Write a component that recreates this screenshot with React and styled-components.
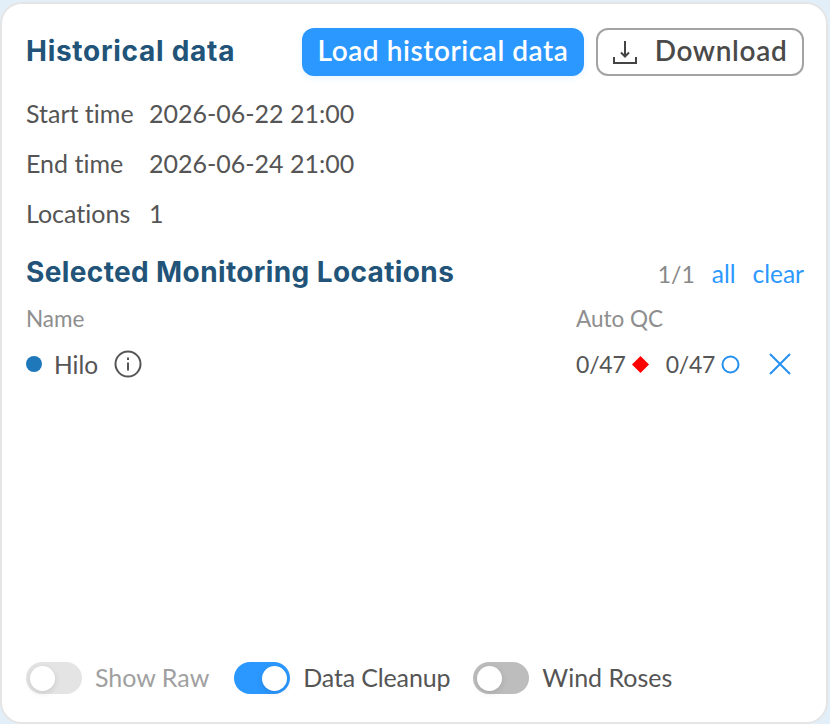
import React from 'react';
import styled, { createGlobalStyle } from 'styled-components';

const GlobalStyle = createGlobalStyle`
    html, body {
        margin: 0;
        padding: 0;
        background: #e2eef8;
    }
    body {
        font-family: Lato, "Noto Sans", sans-serif;
        font-variant-ligatures: none;
    }
`;

const Page = styled.div`
    width: 830px;
    height: 724px;
    box-sizing: border-box;
    padding: 2px 2px 0 0;
    overflow: hidden;
`;

const Card = styled.div`
    height: 100%;
    box-sizing: border-box;
    background: #fff;
    border: 2px solid #e5e5e5;
    border-radius: 22px;
    padding: 24px 22px 28px 24px;
    display: flex;
    flex-direction: column;
`;

const HeaderRow = styled.div`
    display: flex;
    align-items: center;
    justify-content: space-between;
    height: 48px;
`;

const Heading = styled.h2`
    margin: 0;
    font-family: Inter, Roboto, sans-serif;
    font-weight: 700;
    font-size: 28px;
    line-height: 46px;
    letter-spacing: ${(props) => props.$tracking}px;
    padding-bottom: ${(props) => props.$lift || 0}px;
    color: #215478;
`;

const Actions = styled.div`
    display: flex;
    gap: 12px;
`;

const PrimaryButton = styled.button`
    width: 282px;
    height: 48px;
    border: none;
    border-radius: 12px;
    background: #2b98ff;
    color: #fff;
    font-family: inherit;
    font-variant-ligatures: none;
    font-weight: 600;
    font-size: 28px;
    letter-spacing: 0.55px;
    padding: 0 0 4px;
    box-shadow: 0 2px 6px rgba(43, 152, 255, 0.1);
`;

const OutlineButton = styled.button`
    width: 208px;
    height: 48px;
    box-sizing: border-box;
    border: 2px solid #a3a3a3;
    border-radius: 12px;
    background: #fff;
    color: #4a4a4a;
    font-family: inherit;
    font-weight: 600;
    font-size: 28px;
    letter-spacing: 0.65px;
    display: flex;
    align-items: center;
    justify-content: center;
    gap: 18px;
    padding: 0 0 4px;
`;

const DownloadGlyph = styled.svg`
    margin-top: 4px;
`;

const InfoList = styled.div`
    display: flex;
    flex-direction: column;
    margin-top: 12px;
`;

const InfoRow = styled.div`
    display: flex;
    align-items: center;
    height: 50px;
    font-size: 25px;
    color: #555;
`;

const InfoLabel = styled.span`
    width: 123px;
`;

const SectionRow = styled.div`
    display: flex;
    align-items: center;
    justify-content: space-between;
    height: 48px;
    margin-top: 10px;
`;

const Pager = styled.div`
    display: flex;
    align-items: baseline;
    gap: 17px;
    font-size: 24.5px;
    padding-top: 2px;
    color: #888;
`;

const PagerCount = styled.span`
    font-size: 23px;
`;

const TextLink = styled.a`
    color: #2b98ff;
`;

const ColumnHead = styled.div`
    display: flex;
    justify-content: space-between;
    align-items: center;
    height: 44px;
    font-size: 22.5px;
    color: #8e8e8e;
`;

const AutoQcHead = styled.span`
    width: 228px;
`;

const LocationRow = styled.div`
    display: flex;
    align-items: center;
    height: 48px;
    font-size: 23px;
    color: #555;
`;

const Dot = styled.span`
    width: 16px;
    height: 16px;
    border-radius: 50%;
    background: #1f78b9;
    margin-right: 12px;
`;

const LocationName = styled.span`
    font-size: 24.5px;
    margin-right: 16px;
`;

const QcGroup = styled.div`
    margin-left: auto;
    width: 228px;
    box-sizing: border-box;
    padding-right: 12px;
    display: flex;
    align-items: center;
`;

const Count = styled.span`
    letter-spacing: -0.2px;
    margin-left: ${(props) => props.$before || 0}px;
    margin-right: ${(props) => props.$after}px;
`;

const Spacer = styled.div`
    flex: 1;
`;

const ToggleRow = styled.div`
    display: flex;
    align-items: center;
    height: 32px;
`;

const ToggleTrack = styled.span`
    width: 56px;
    height: 32px;
    box-sizing: border-box;
    padding: 3.5px;
    border-radius: 16px;
    margin-right: 13px;
    display: flex;
    justify-content: ${(props) => (props.$on ? 'flex-end' : 'flex-start')};
    background: ${(props) => props.$color};
`;

const ToggleKnob = styled.span`
    width: 25px;
    height: 25px;
    border-radius: 50%;
    background: #fff;
    box-shadow: 0 2px 6px rgba(0, 0, 0, 0.12);
`;

const ToggleLabel = styled.span`
    font-size: 25px;
    padding-bottom: 2px;
    letter-spacing: ${(props) => props.$tracking || 0}px;
    color: ${(props) => (props.$muted ? '#a0a0a0' : '#555')};
    margin-right: ${(props) => props.$gap || 0}px;
`;

const Toggle = ({ on, color, label, muted, gap, tracking }) => (
    <>
        <ToggleTrack $on={on} $color={color}><ToggleKnob /></ToggleTrack>
        <ToggleLabel $muted={muted} $gap={gap} $tracking={tracking}>{label}</ToggleLabel>
    </>
);

const DownloadIcon = () => (
    <DownloadGlyph width="24" height="23" viewBox="0 0 24 23" fill="none" stroke="#444" strokeWidth="2">
        <path d="M12 0v15M8 11.5l4 4 4-4" />
        <path d="M1 16v6h22v-6" />
    </DownloadGlyph>
);

const InfoIcon = () => (
    <svg width="28" height="28" viewBox="0 0 28 28" fill="none" stroke="#555" strokeWidth="2">
        <circle cx="14" cy="14" r="12.5" />
        <path d="M14 12.5v8M14 7.5v2.5" />
    </svg>
);

const Diamond = () => (
    <svg width="17" height="17" viewBox="0 0 18 18">
        <path d="M9 0l9 9-9 9-9-9z" fill="#f00" />
    </svg>
);

const Circle = () => (
    <svg width="19" height="19" viewBox="0 0 19 19" fill="none" stroke="#2490f0" strokeWidth="2">
        <circle cx="9.5" cy="9.5" r="8" />
    </svg>
);

const CloseIcon = () => (
    <svg width="24" height="24" viewBox="0 0 24 24" fill="none" stroke="#2490f0" strokeWidth="2">
        <path d="M2 2l20 20M22 2L2 22" />
    </svg>
);

const App = () => (
    <Page>
        <GlobalStyle />
        <Card>
            <HeaderRow>
                <Heading $tracking={0.72} $lift={2}>Historical data</Heading>
                <Actions>
                    <PrimaryButton>Load historical data</PrimaryButton>
                    <OutlineButton><DownloadIcon />Download</OutlineButton>
                </Actions>
            </HeaderRow>
            <InfoList>
                <InfoRow><InfoLabel>Start time</InfoLabel>2026-06-22 21:00</InfoRow>
                <InfoRow><InfoLabel>End time</InfoLabel>2026-06-24 21:00</InfoRow>
                <InfoRow><InfoLabel>Locations</InfoLabel>1</InfoRow>
            </InfoList>
            <SectionRow>
                <Heading $tracking={0.38}>Selected Monitoring Locations</Heading>
                <Pager>
                    <PagerCount>1/1</PagerCount>
                    <TextLink>all</TextLink>
                    <TextLink>clear</TextLink>
                </Pager>
            </SectionRow>
            <ColumnHead>
                <span>Name</span>
                <AutoQcHead>Auto QC</AutoQcHead>
            </ColumnHead>
            <LocationRow>
                <Dot />
                <LocationName>Hilo</LocationName>
                <InfoIcon />
                <QcGroup>
                    <Count $after={6}>0/47</Count>
                    <Diamond />
                    <Count $before={17} $after={6}>0/47</Count>
                    <Circle />
                    <Spacer />
                    <CloseIcon />
                </QcGroup>
            </LocationRow>
            <Spacer />
            <ToggleRow>
                <Toggle color="#e4e4e4" label="Show Raw" muted gap={25} />
                <Toggle on color="#2b98ff" label="Data Cleanup" gap={23} tracking={-0.15} />
                <Toggle color="#bdbdbd" label="Wind Roses" />
            </ToggleRow>
        </Card>
    </Page>
);

export default App;
